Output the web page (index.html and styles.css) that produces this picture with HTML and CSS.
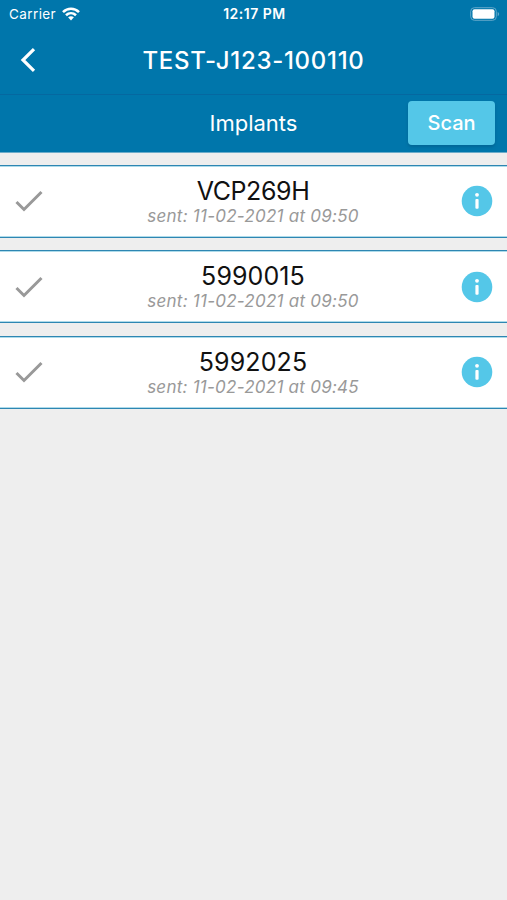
FILE: index.html
```html
<!DOCTYPE html>
<html lang="en">
<head>
<meta charset="utf-8">
<title>Implants</title>
<link rel="stylesheet" href="styles.css">
</head>
<body>
<header class="top">
  <div class="status">
    <div class="carrier"><span>Carrier</span>
      <svg class="wifi" viewBox="0 0 18 14"><g fill="none" stroke="#fff" stroke-width="2.6"><path d="M1 5.1C5.6.7 12.4.7 17 5.1"/><path d="M4 8.3c2.9-2.7 7.1-2.7 10 0"/></g><path d="M6.1 10.3c1.7-1.5 4.1-1.5 5.8 0L9 13.4z" fill="#fff"/></svg>
    </div>
    <time>12:17 PM</time>
    <svg class="battery" viewBox="0 0 30 14"><rect x=".7" y=".7" width="25.6" height="12.6" rx="3.7" fill="none" stroke="#62a8ca"/><rect x="2.5" y="2.2" width="22" height="9.6" rx="2" fill="#fff"/><path d="M27.7 4.7q3 2.3 0 4.6z" fill="#62a8ca"/></svg>
  </div>
  <nav class="nav">
    <svg class="back" viewBox="0 0 16 26"><path d="M14 2.2 3 13l11 10.8" fill="none" stroke="#fff" stroke-width="3.2"/></svg>
    <h1>TEST-J123-100110</h1>
  </nav>
</header>
<div class="bar"><h2>Implants</h2><button class="scan">Scan</button></div>
<main class="list">
  <article class="row">
    <svg class="check" viewBox="0 0 28 22"><path d="m1.5 12 7.5 7.5L26.5 2" fill="none" stroke="#999" stroke-width="3"/></svg>
    <div class="text"><h3 class="code letters">VCP269H</h3><p class="sent">sent: 11-02-2021 at 09:50</p></div>
    <svg class="info" viewBox="0 0 32 32"><circle cx="16" cy="16" r="15.3" fill="#54c7e8"/><circle cx="16" cy="9.8" r="1.9" fill="#fff"/><rect x="14.4" y="14" width="3.2" height="9.8" rx="1" fill="#fff"/></svg>
  </article>
  <article class="row">
    <svg class="check" viewBox="0 0 28 22"><path d="m1.5 12 7.5 7.5L26.5 2" fill="none" stroke="#999" stroke-width="3"/></svg>
    <div class="text"><h3 class="code">5990015</h3><p class="sent">sent: 11-02-2021 at 09:50</p></div>
    <svg class="info" viewBox="0 0 32 32"><circle cx="16" cy="16" r="15.3" fill="#54c7e8"/><circle cx="16" cy="9.8" r="1.9" fill="#fff"/><rect x="14.4" y="14" width="3.2" height="9.8" rx="1" fill="#fff"/></svg>
  </article>
  <article class="row">
    <svg class="check" viewBox="0 0 28 22"><path d="m1.5 12 7.5 7.5L26.5 2" fill="none" stroke="#999" stroke-width="3"/></svg>
    <div class="text"><h3 class="code">5992025</h3><p class="sent">sent: 11-02-2021 at 09:45</p></div>
    <svg class="info" viewBox="0 0 32 32"><circle cx="16" cy="16" r="15.3" fill="#54c7e8"/><circle cx="16" cy="9.8" r="1.9" fill="#fff"/><rect x="14.4" y="14" width="3.2" height="9.8" rx="1" fill="#fff"/></svg>
  </article>
</main>
</body>
</html>
```
FILE: styles.css
```css
* { box-sizing: border-box; }
body { margin: 0; min-height: 900px; background: #eee; font-family: Inter, "Liberation Sans", sans-serif; color: #111; }
h1, h2, h3, p { margin: 0; font-weight: 400; }
svg { display: block; }
.top { height: 95px; background: #0076ab; color: #fff; border-bottom: 1px solid #0568a0; }
.status { height: 27px; padding: 0 7px 0 9px; display: grid; grid-template-columns: 1fr auto 1fr; align-items: center; font-size: 13.5px; letter-spacing: .4px; }
.carrier { display: flex; align-items: center; gap: 6px; }
.status time { font-weight: 600; font-size: 14px; letter-spacing: .5px; }
.wifi { width: 18px; height: 14px; }
.battery { width: 30px; height: 14px; justify-self: end; }
.nav { height: 66px; display: grid; grid-template-columns: 40px 1fr 40px; align-items: center; }
.back { width: 16px; height: 26px; margin-left: 19.5px; }
.nav h1 { font-size: 24px; font-weight: 500; letter-spacing: .7px; text-align: center; white-space: nowrap; }
.bar { height: 58px; padding: 0 12px 1px; background: #0076ab; color: #fff; display: grid; grid-template-columns: 87px 1fr 87px; align-items: center; border-bottom: 1px solid #6cacca; }
.bar h2 { grid-column: 2; font-size: 22px; text-align: center; }
.scan { height: 44px; border: 0; border-radius: 4px; padding: 0; background: #54c7e8; color: #fff; font: 500 20px Inter, sans-serif; box-shadow: 0 2px 3px #00507866; }
.list { padding-top: 11.8px; display: grid; gap: 12.5px; }
.row { height: 73px; padding: 0 14px 0 15px; background: #fff; border: solid #2e86b2; border-width: 1px 0; box-shadow: inset 0 1px #aedbea, inset 0 -1px #aedbea; display: grid; grid-template-columns: 32px 1fr 32px; align-items: center; }
.check { width: 28px; height: 22px; }
.info { width: 32px; height: 32px; }
.text { text-align: center; padding: 1px 2px 0 0; }
.code { font-size: 25px; line-height: 28px; letter-spacing: .1px; }
.letters { letter-spacing: -.4px; }
.sent { font-size: 17px; line-height: 22px; letter-spacing: .25px; font-style: italic; color: #999; }
```
